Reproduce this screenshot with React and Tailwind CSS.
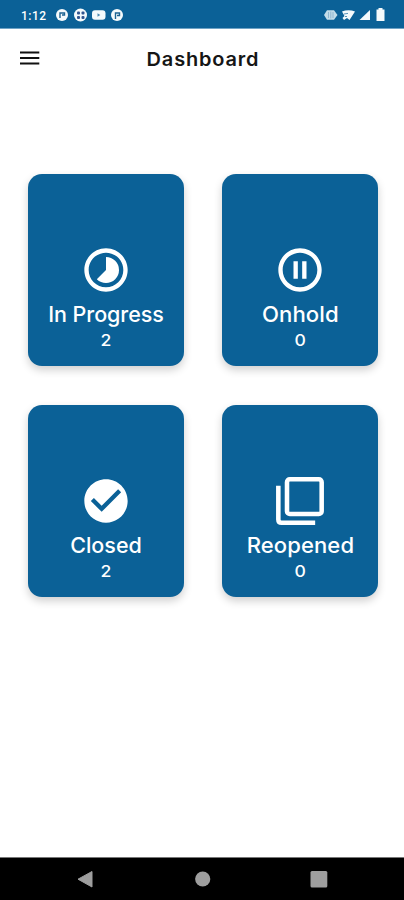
import React from "react";
import {
  MdCheckCircle,
  MdOutlinePauseCircleOutline,
  MdTimelapse,
} from "react-icons/md";

function StackIcon({ className }) {
  return (
    <svg className={className} viewBox="0 0 24 24" fill="none" stroke="currentColor" strokeWidth="2.100">
      <rect x="6" y="2" width="16" height="16" rx="1.300" />
      <path d="M2 5v15.500q0 1.500 1.500 1.500H19" />
    </svg>
  );
}

const cards = [
  { label: "In Progress", count: 2, Icon: MdTimelapse, text: "tracking-[-0.05px]" },
  { label: "Onhold", count: 0, Icon: MdOutlinePauseCircleOutline, text: "tracking-[0.1px] scale-x-[1.03]" },
  { label: "Closed", count: 2, Icon: MdCheckCircle, text: "tracking-[0px]" },
  { label: "Reopened", count: 0, Icon: StackIcon, text: "tracking-[0.1px] scale-x-[1.025]" },
];

function StatusBar() {
  return (
    <header className="flex h-[29px] shrink-0 items-center justify-between border-b border-[#6fa3c6] bg-[#0b6197] pr-[18px] pl-[21px] pt-[2px] text-white">
      <div className="flex items-center">
        <span className="w-[35px] pt-px font-[Roboto] text-[12px] leading-none font-medium tracking-[0.5px]">1:12</span>
        <svg width="68" height="14" viewBox="0 0 68 14" fill="#f4fafc">
          <circle cx="6" cy="7" r="6" />
          <path d="M4 10V5h4.500v2H6" fill="none" stroke="#1c6391" strokeWidth="1.400" />
          <circle cx="24.500" cy="7" r="6.500" />
          <g fill="#31558f">
            <rect x="21" y="3.500" width="3" height="3" rx="1" />
            <rect x="25.500" y="3.500" width="3" height="3" rx="1" />
            <rect x="21" y="8" width="3" height="3" rx="1" />
            <rect x="25.500" y="8" width="3" height="3" rx="1" />
          </g>
          <rect x="36" y="2.200" width="13.500" height="9.600" rx="3" />
          <path d="M41.500 5.300v3.400l2.800-1.700z" fill="#4b89b0" />
          <circle cx="61" cy="7" r="6" />
          <path d="M59.500 11V5h4v2.500H61" fill="none" stroke="#1c6391" strokeWidth="1.400" />
        </svg>
      </div>
      <svg width="62" height="16" viewBox="0 0 62 16" fill="#f4fafc">
        <path d="M0 8l3-4.800h7L13.500 8 10 12.800H3z" fill="#c3dce9" />
        <path d="M4.500 5v6M6.800 4.500v7M9 5v6" stroke="#8fb6cf" />
        <path d="M18 4.500c4-1.800 9-1.800 13 0l-5.500 8.500-2.500-2-3 2-1.500-2 2-2z" />
        <path d="M20 7l4-.6M21 9.500h2" stroke="#5b93b7" strokeWidth="1" />
        <path d="M46 3v10H35.500z" />
        <path d="M54.500 2.500V1h4v1.500h2V14h-8V2.500z" />
      </svg>
    </header>
  );
}

function StatusCard({ label, count, Icon, text }) {
  return (
    <div className="flex h-[192px] flex-col items-center rounded-[14px] bg-[#0b6197] pt-[70px] text-white shadow-[0_4px_8px_rgba(0,0,0,0.19)]">
      <Icon className="mr-px size-[52px] shrink-0" />
      <div className={`mt-[5px] text-[21.500px] leading-[26px] font-medium whitespace-nowrap ${text}`}>
        {label}
      </div>
      <div className="mt-px scale-x-110 text-[16px] leading-[24px] font-medium">{count}</div>
    </div>
  );
}

export default function App() {
  return (
    <div className="flex h-[900px] w-[404px] flex-col overflow-hidden bg-white font-[Inter,sans-serif]">
      <StatusBar />
      <div className="grid h-[59px] shrink-0 grid-cols-[48px_1fr_46px] items-center">
        <svg className="mb-[2px] ml-[20px]" width="20" height="14" viewBox="0 0 20 14" stroke="#111" strokeWidth="1.900">
          <path d="M0 1.500h19.300M0 7h19.300M0 12.500h19.300" />
        </svg>
        <h1 className="mt-px scale-x-[1.05] text-center text-[19px] leading-none font-semibold tracking-[0.800px] text-[#161616]">
          Dashboard
        </h1>
      </div>
      <main className="grid grow grid-cols-[156px_156px] content-start gap-x-[38px] gap-y-[39px] pt-[86px] pl-[28px]">
        {cards.map((card) => (
          <StatusCard key={card.label} {...card} />
        ))}
      </main>
      <nav className="h-[43px] shrink-0 border-t border-[#777] bg-black">
        <svg width="404" height="42" viewBox="0 0 404 42" fill="#9e9e9e">
          <path d="M92 13.500v15.500L78 21.200z" stroke="#9e9e9e" strokeLinejoin="round" />
          <circle cx="202.700" cy="21" r="7.600" />
          <rect x="310.500" y="13" width="16.800" height="16.500" rx="1.500" />
        </svg>
      </nav>
    </div>
  );
}
